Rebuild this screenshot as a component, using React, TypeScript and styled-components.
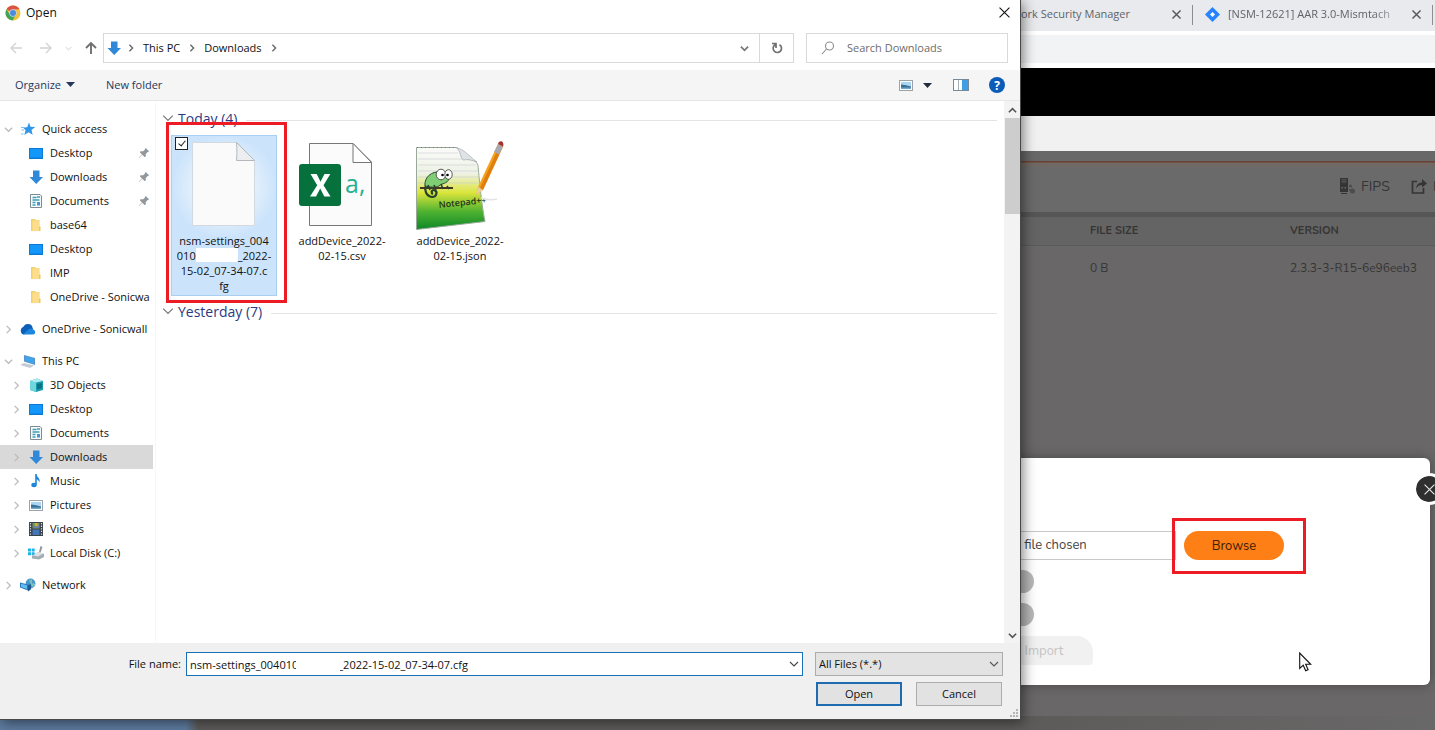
import React from "react";
import styled, { createGlobalStyle, css } from "styled-components";

const UI = `"Segoe UI", "Open Sans", "Noto Sans", sans-serif`;
const WEB = `"Nunito", "Open Sans", "Noto Sans", sans-serif`;

/* ---------- base ---------- */

const GlobalStyle = createGlobalStyle`
  *, *::before, *::after { box-sizing: border-box; }
  body { margin: 0; font-family: ${UI}; font-size: 11px; color: #111; background: #686767; }
  button, input, select { font: inherit; color: inherit; margin: 0; }
  button { padding: 0; border: 0; background: none; cursor: default; }
  ul { list-style: none; margin: 0; padding: 0; }
  svg { display: block; flex: none; }
`;

const Desktop = styled.div`
  --side: 415px;
  position: relative;
  min-height: 100vh;
  overflow: hidden;
  display: flex;
  flex-direction: column;
`;

/* ---------- browser behind the dialog ---------- */

const behind = css`
  padding-left: calc(100% - var(--side));
`;

const TabStrip = styled.div`
  ${behind}
  height: 31px;
  display: flex;
  align-items: center;
  background: #e8eaed;
  color: #5f6368;
`;

const Tab = styled.div<{ $width: number }>`
  display: flex;
  align-items: center;
  width: ${(p) => p.$width}px;
  height: 20px;
  margin-top: -2px;
  padding: 0 11px 0 12px;
  border-right: 1px solid #8b8d91;
  flex: none;
`;

const TabTitle = styled.span<{ $fade?: boolean }>`
  flex: 1;
  display: flex;
  justify-content: ${(p) => (p.$fade ? "flex-start" : "flex-end")};
  min-width: 0;
  overflow: ${(p) => (p.$fade ? "hidden" : "visible")};
  white-space: nowrap;
  line-height: 18px;
  padding-bottom: 2px;
  margin: ${(p) => (p.$fade ? "0 12px 0 8px" : "0 42px 0 0")};
  ${(p) =>
    p.$fade && "mask-image: linear-gradient(90deg, #000 84%, rgba(0, 0, 0, 0.3));"}
`;

const AddressBar = styled.div`
  height: 37px;
  border: solid #fff;
  border-width: 4px 0 5px;
  background: #f1f3f4;
`;

const BrandBar = styled.div`
  height: 48px;
  background: #000;
`;

const SubBar = styled.div`
  height: 35px;
  background: #f1f1f1;
`;

const Dimmed = styled.main`
  flex: 1;
  display: flex;
  flex-direction: column;
  background: #696767;
  font-family: ${WEB};
  color: #353535;
`;

const Actions = styled.div`
  height: 61px;
  padding-top: 9px;
  display: flex;
  align-items: center;
  justify-content: flex-end;
  gap: 20px;
  overflow: hidden;
  background: linear-gradient(#686868 10px, #6b4034 10px, #6b4034 11px, #746862 12px, #6a6a6a 17px);
`;

const Action = styled.button`
  display: flex;
  align-items: center;
  gap: 6px;
  height: 20px;
  font-size: 14px;
  width: 52px;
  white-space: nowrap;
  overflow: hidden;

  & + & {
    width: 24px;
  }
`;

const Table = styled.table`
  width: 100%;
  border-collapse: separate;
  border-spacing: 0;
  table-layout: fixed;
  border-top: 5px solid #565656;

  th,
  td {
    padding: 0;
    text-align: left;
    font-size: 11px;
    height: 29px;
    line-height: 16px;
  }
  th {
    background: #656464;
    border-bottom: 1px solid #5a5a5a;
  }
  td {
    height: 43px;
    font-size: 12px;
  }
  th:nth-child(2) {
    width: 200px;
  }
  th:last-child {
    width: 145px;
  }
`;

const Modal = styled.section`
  position: absolute;
  right: 5px;
  top: 458px;
  width: 640px;
  height: 227px;
  padding: 73px 0 0;
  border-radius: 6px;
  background: #fff;
  box-shadow: 0 0 12px rgba(0, 0, 0, 0.3);
  font-family: ${WEB};
  display: flex;
  flex-direction: column;
`;

const ChooseRow = styled.div`
  display: flex;
  justify-content: flex-end;
  gap: 8px;
  padding-right: 146px;
`;

const Chosen = styled.div`
  width: 320px;
  height: 29px;
  padding-left: 147px;
  border: 1px solid #c9c9c9;
  line-height: 27px;
  font-size: 13px;
  color: #444;
`;

const BrowseButton = styled.button`
  position: relative;
  width: 100px;
  height: 29px;
  border-radius: 15px;
  background: #ff7f17;
  color: #3c1d04;
  font-family: ${WEB};
  font-size: 13px;
`;

const Switches = styled.div`
  display: flex;
  flex-direction: column;
  gap: 10px;
  padding: 10px 396px 0 0;
  align-items: flex-end;
`;

const Switch = styled.input`
  appearance: none;
  margin: 0;
  width: 46px;
  height: 23px;
  border-radius: 12px;
  background: #b7b7b7;
`;

const ImportButton = styled.button`
  align-self: flex-end;
  width: 98px;
  height: 29px;
  margin: 10px 337px 0 0;
  border-radius: 4px 16px 4px 16px;
  background: #f1f1f1;
  color: #c4c4c4;
  font-family: ${WEB};
  font-size: 13px;
`;

const CloseModal = styled.button`
  position: absolute;
  right: -15px;
  top: 15px;
  width: 32px;
  height: 32px;
  border-radius: 50%;
  border: 3px solid #fff;
  background: #2f2f2f;
  background-clip: padding-box;
  display: grid;
  place-items: center;
`;

const Cursor = styled.svg`
  position: absolute;
  right: 118px;
  top: 194px;
`;

const Marker = styled.span<{ $inset: string }>`
  position: absolute;
  inset: ${(p) => p.$inset};
  border: 3px solid #ed1c24;
  pointer-events: none;
  z-index: 2;
`;

const Wallpaper = styled.div`
  position: absolute;
  left: 0;
  bottom: 0;
  width: 100%;
  height: 14px;
  background: linear-gradient(90deg, #5d7a9e 186px, #5d5b5a 198px, #5d5b5a calc(100% - 415px), #696868 100%);
`;

/* ---------- file dialog ---------- */

const Dialog = styled.section`
  position: absolute;
  inset: 0 calc(var(--side) - 1px) 10px 0;
  display: flex;
  flex-direction: column;
  background: #fff;
  border: solid #484848;
  border-width: 0 1px 1px 0;
  box-shadow: 2px 2px 12px rgba(0, 0, 0, 0.5);
`;

const TitleBar = styled.header`
  height: 33px;
  padding: 0 8px 8px 5px;
  display: flex;
  align-items: center;
  gap: 5px;
`;

const Title = styled.h1`
  flex: 1;
  margin: 0;
  font-size: 12px;
  font-weight: 400;
`;

const IconButton = styled.button<{ $w?: number; $h?: number }>`
  width: ${(p) => p.$w ?? 16}px;
  height: ${(p) => p.$h ?? 16}px;
  display: grid;
  place-items: center;
  flex: none;
`;

const NavRow = styled.nav`
  display: flex;
  align-items: center;
  height: 30px;
  padding: 0 12px 0 8px;
`;

const NavButtons = styled.div`
  display: flex;
  align-items: center;
  width: 95px;
  gap: 14px;

  & > :nth-child(3) {
    margin: 0 -3px 0 -4px;
  }
`;

const PathBox = styled.div`
  flex: 1;
  display: flex;
  align-items: center;
  height: 30px;
  border: 1px solid #d9d9d9;
`;

const Crumbs = styled.div`
  flex: 1;
  display: flex;
  align-items: center;
  gap: 8px;
  padding-left: 2px;

  & > svg:first-child {
    margin-right: -3px;
  }
  & > span {
    padding-bottom: 2px;
  }
`;

const Refresh = styled(IconButton)`
  border-left: 1px solid #d9d9d9;
`;

const SearchBox = styled.label`
  width: 202px;
  height: 30px;
  margin-left: 12px;
  padding: 0 13px 0 14px;
  display: flex;
  align-items: center;
  gap: 12px;
  border: 1px solid #d9d9d9;

  input {
    width: 100%;
    min-width: 0;
    padding: 0 0 2px;
    border: 0;
    outline: 0;
    background: none;
  }
  input::placeholder {
    color: #6d6d6d;
    opacity: 1;
  }
`;

const Toolbar = styled.div`
  display: flex;
  align-items: center;
  height: 31px;
  margin-top: 7px;
  padding: 0 15px;
  gap: 31px;
  background: #f5f5f6;
  border-bottom: 1px solid #e6e6e8;
  color: #26395b;
`;

const TextButton = styled.button`
  display: flex;
  align-items: center;
  gap: 5px;
  height: 24px;
  padding-bottom: 2px;
`;

const ViewTools = styled.div`
  display: flex;
  align-items: center;
  gap: 7px;
  margin-left: auto;

  & > :nth-child(n + 3) {
    margin-left: 10px;
  }
`;

const Body = styled.div`
  flex: 1;
  min-height: 0;
  display: flex;
`;

const Sidebar = styled.ul`
  width: 156px;
  padding: 16px 2px 0 0;
  border-right: 1px solid #f7f7f7;
  overflow: hidden;
  flex: none;
`;

const TreeRow = styled.li<{ $child?: boolean; $on?: boolean; $gap?: boolean }>`
  display: flex;
  align-items: center;
  gap: 7px;
  height: 24px;
  margin-top: ${(p) => (p.$gap ? 8 : 0)}px;
  padding-left: ${(p) => (p.$child ? 11 : 3)}px;
  background: ${(p) => (p.$on ? "#d9d9d9" : "none")};
  white-space: nowrap;
  overflow: hidden;
`;

const Twisty = styled.span`
  width: 10px;
  display: grid;
  place-items: center;
  flex: none;
`;

const RowLabel = styled.span`
  flex: 1;
  overflow: hidden;
  margin-left: -1px;
  padding-bottom: 2px;
`;

const PinSlot = styled.span`
  padding-right: 3px;
`;

const Pane = styled.div`
  flex: 1;
  min-width: 0;
  padding: 8px 7px 0 6px;
`;

const GroupHead = styled.h2`
  display: flex;
  align-items: center;
  gap: 4px;
  height: 20px;
  margin: 0;
  padding-bottom: 2px;
  font-size: 14px;
  font-weight: 400;
  color: #2c3a82;

  &::after {
    content: "";
    flex: 1;
    height: 1px;
    margin: 4px 0 0 5px;
    background: #e4e4e8;
  }
`;

const Tiles = styled.ul`
  display: grid;
  grid-template-columns: repeat(auto-fill, 106px);
  align-items: start;
  gap: 12px;
  padding: 6px 0 6px 9px;
`;

const Tile = styled.li<{ $on?: boolean }>`
  position: relative;
  height: 161px;
  padding: 4px 0 0;
  background: ${(p) => (p.$on ? "radial-gradient(closest-side at 50% 32%, #e2effc 60%, #cce4fb)" : "none")};
  border: 1px solid ${(p) => (p.$on ? "#a9d0f3" : "transparent")};
  text-align: center;
  line-height: 15px;
  display: flex;
  flex-direction: column;
  align-items: center;
  gap: 1px;
`;

const TileCheck = styled.input`
  position: absolute;
  left: 3px;
  top: 1px;
  appearance: none;
  width: 13px;
  height: 13px;
  margin: 0;
  border: 1px solid #222;
  background: #fff;

  &:checked::after {
    content: "";
    position: absolute;
    left: 4px;
    top: 1px;
    width: 4px;
    height: 7px;
    border: solid #222;
    border-width: 0 1px 1px 0;
    rotate: 40deg;
  }
`;

const Redacted = styled.span`
  display: inline-block;
  width: 42px;
  height: 14px;
  vertical-align: top;
  background: #fff;
`;

const ScrollTrack = styled.div`
  width: 16px;
  display: flex;
  flex-direction: column;
  align-items: center;
  justify-content: space-between;
  background: #f3f3f3;
  padding-top: 1px;
  flex: none;
`;

const Thumb = styled.div`
  width: 15px;
  height: 96px;
  background: #cdcdcd;
  margin-bottom: auto;
`;

const Footer = styled.footer`
  padding: 9px 17px 13px 0;
  background: #f0f0f0;
  display: flex;
  flex-direction: column;
  gap: 6px;
`;

const FieldRow = styled.div`
  display: flex;
  align-items: center;

  & > label {
    width: 186px;
    padding: 0 5px 2px 0;
    text-align: right;
  }
`;

const NameBox = styled.div`
  position: relative;
  flex: 1;
  height: 24px;
  display: flex;
  align-items: center;
  border: 1px solid #1b6fb5;
  background: #fff;

  input {
    flex: 1;
    min-width: 0;
    height: 20px;
    padding: 0 3px;
    border: 0;
    outline: 0;
    background: none;
  }
`;

const NameMask = styled.span`
  position: absolute;
  left: 109px;
  top: 3px;
  width: 44px;
  height: 16px;
  background: #fff;
`;

const TypeBox = styled.div`
  position: relative;
  width: 188px;
  margin-left: 12px;

  select {
    display: block;
    appearance: none;
    width: 100%;
    height: 24px;
    padding: 0 3px 2px;
    border: 1px solid #acacac;
    border-radius: 0;
    background: #e3e3e3;
  }
  svg {
    position: absolute;
    right: 4px;
    top: 7px;
  }
`;

const Buttons = styled.div`
  display: flex;
  justify-content: flex-end;
  gap: 14px;
  padding-right: 1px;
`;

const PushButton = styled.button<{ $primary?: boolean }>`
  width: 86px;
  height: 24px;
  padding-bottom: 2px;
  border: ${(p) => (p.$primary ? "2px solid #1f6bb0" : "1px solid #adadad")};
  background: #e2e2e2;
`;

const Grip = styled.svg`
  position: absolute;
  right: 1px;
  bottom: 1px;
`;

/* ---------- icons ---------- */

const Chevron = ({ dir, color = "#666", size = 10, w = 1.4 }: { dir: "up" | "down" | "right"; color?: string; size?: number; w?: number }) => (
  <svg width={size} height={size} viewBox="0 0 10 10" fill="none" stroke={color} strokeWidth={w}>
    <path d={dir === "right" ? "M3 1l4 4-4 4" : dir === "up" ? "M1 7l4-4 4 4" : "M1 3l4 4 4-4"} />
  </svg>
);

const Cross = ({ size, color, w = 1 }: { size: number; color: string; w?: number }) => (
  <svg width={size} height={size} viewBox="0 0 10 10" stroke={color} strokeWidth={w}>
    <path d="M.5 .5l9 9M9.500 .5l-9 9" />
  </svg>
);

const Arrow = ({ d, color, w }: { d: string; color: string; w: number }) => (
  <svg width="14" height="14" viewBox="0 0 14 14" fill="none" stroke={color} strokeWidth={w}>
    <path d={d} />
  </svg>
);

const Caret = ({ color }: { color: string }) => (
  <svg width="9" height="5" viewBox="0 0 9 5" fill={color}>
    <path d="M0 0h9L4.500 5z" />
  </svg>
);

const Chrome = () => (
  <svg width="16" height="16" viewBox="0 0 16 16">
    <circle cx="8" cy="8" r="7.500" fill="#f2c33a" />
    <path d="M8 8L1.500 4.300A7.500 7.500 0 0 1 14.500 4.300L8 4.500z" fill="#dc5246" />
    <path d="M1.500 4.300A7.500 7.500 0 0 0 7.500 15.500L11 9.500 8 8 4.900 9.700z" fill="#3fa35c" />
    <circle cx="8" cy="8" r="3.700" fill="#c5d6ea" />
    <circle cx="8" cy="8" r="3" fill="#4a8be0" />
  </svg>
);

const Pin = () => (
  <svg width="12" height="12" viewBox="0 0 12 12">
    <path d="M7.500 .8l3.700 3.700-1.500.4-2 2 .2 2.500L6.500 10 4.300 7.700 1 11l-.3-.3L4 7.400 1.800 5.200l.8-1 2.600.1 2-2z" fill="#90979d" />
  </svg>
);

type IconName =
  | "star" | "desktop" | "down" | "doc" | "folder" | "cloud" | "pc" | "cube" | "music" | "picture" | "video" | "disk" | "network";

const shapes: Record<IconName, React.ReactNode> = {
  star: (
    <>
      <path d="M9 1.500l1.500 4.200 4.700.3-3.700 3 1.200 4.800-4.200-2.600-4.200 2.800 1.300-4.800L3.500 7l3.800-.9z" fill="#2f97ea" />
      <path d="M1 6.500h4M1.500 9h2.500M1 13h2.500" stroke="#7fbdf0" />
    </>
  ),
  desktop: (
    <>
      <rect x="1" y="3" width="14" height="11" fill="#0a7ad6" />
      <rect x="2" y="4" width="12" height="8.500" fill="#1397fb" />
    </>
  ),
  down: <path d="M5 1.500h6.500v6.500H15L8.200 15 1.500 8H5z" fill="#3089d8" />,
  doc: (
    <>
      <path d="M2.500 1.500h9.500l1.500 1.500v11.500h-11z" fill="#f8fbfc" stroke="#7d8a91" />
      <path d="M4.500 4.500h4M4.500 7h7M4.500 9.500h3M4.500 12h3M9 4h3" stroke="#3f9cb4" strokeWidth="1.300" />
      <path d="M9 9h3v3.500H9z" fill="#4595d8" />
    </>
  ),
  folder: (
    <>
      <path d="M3 2h4l1 1h3.500v11H3z" fill="#f3cf6d" />
      <path d="M4.500 3.500H11V14l-6.500.3z" fill="#fbdd8b" />
      <path d="M11 9.500h1.500V14H11z" fill="#f0c75e" />
    </>
  ),
  cloud: (
    <>
      <path d="M4 13.500a4 4 0 0 1-.6-7.700A5 5 0 0 1 12 5l1 3z" fill="#0e5fb8" />
      <path d="M3 13.500L9 8a4 4 0 0 1 5 1 2.500 2.500 0 0 1-.5 4.500z" fill="#1d86dd" />
    </>
  ),
  pc: (
    <>
      <path d="M4 2l11 3v7L4 8.500z" fill="#5793c9" />
      <path d="M5 3.300l9 2.500v4.900L5 7.700z" fill="#3fa4ee" />
      <path d="M0 12l4-2 10 2.500-4 2.500z" fill="#c3ccd4" />
    </>
  ),
  cube: (
    <>
      <path d="M2 4l7-2.500L15 4v9l-7 2-6-2z" fill="#1a9cae" />
      <path d="M2 4l6 1.500V15l-6-2z" fill="#6fd6de" />
      <path d="M2 4l7-2.500L15 4 8 5.500z" fill="#b0edf0" />
      <path d="M9 7l5-1v5l-5 1.500z" fill="#0c7385" />
    </>
  ),
  music: (
    <>
      <path d="M8 1v10.500" stroke="#1d86dc" strokeWidth="1.600" />
      <path d="M8 1c.5 3 4.500 3.500 3.500 8.500C11 7.500 9.500 6.500 8 6z" fill="#1d86dc" />
      <ellipse cx="6" cy="12" rx="2.700" ry="2.200" fill="#1d86dc" />
    </>
  ),
  picture: (
    <>
      <rect x="1.500" y="3.500" width="13" height="10" fill="#fafcfd" stroke="#9aa3a9" />
      <rect x="3" y="5" width="10" height="7" fill="#a9d4f2" />
      <path d="M3 7.500l4 .5 6 1.500V12H3z" fill="#3b6f93" />
      <path d="M3 10.500h10V12H3z" fill="#6fa7cd" />
    </>
  ),
  video: (
    <>
      <rect x="1" y="1" width="14" height="14" fill="#39414a" />
      <path d="M2.500 2v13M13.500 2v13" stroke="#d8dde0" strokeWidth="1.200" strokeDasharray="1.300 1.300" />
      <rect x="4.500" y="2" width="7" height="5.500" fill="#7b9c58" />
      <rect x="4.500" y="8.500" width="7" height="5.500" fill="#4477ba" />
      <path d="M5 3l2 2.500h3L11 3v4H5z" fill="#6d7fa8" />
      <path d="M7 2h2.500v3H7z" fill="#d4ab43" />
    </>
  ),
  disk: (
    <>
      <path d="M0 3.500h3v3H0zM3.700 3.500h3v3h-3zM0 7.200h3v3H0zM3.700 7.200h3v3h-3z" fill="#1fb1e8" />
      <path d="M4 11l6-4 6 2v3l-5 2.500-7-1z" fill="#a3adb4" />
      <path d="M5 10.500L10 7l5.500 1.500L10 11.500z" fill="#dbe1e5" />
      <path d="M12.500 1l2 1-2 5.500-1.500-.5z" fill="#8c98a0" />
    </>
  ),
  network: (
    <>
      <circle cx="10.500" cy="6.500" r="4.900" fill="#4898c9" />
      <path d="M9 3c2-1.500 4 0 3 2s2 1 3 2-2 3-3 3z" fill="#7cc0c4" />
      <path d="M0 5.500l8 2v6l-8-3z" fill="#2c77b7" />
      <path d="M1 6.800l6 1.500v3.800L1 10z" fill="#60bdf3" />
      <path d="M8 8l3-.8v5L8 14.500z" fill="#1c5a90" />
    </>
  ),
};

const Icon = ({ name }: { name: IconName }) => (
  <svg width="16" height="16" viewBox="0 0 16 16" fill="none">
    {shapes[name]}
  </svg>
);

const BlankFile = () => (
  <svg width="90" height="92" viewBox="0 0 90 92">
    <path d="M13.500 2.500H58L75.500 21V85.500H13.500z" fill="#fafafa" stroke="#d4d9df" />
    <path d="M57.500 2.500C58 10 58 16 57.500 20.500H75.500z" fill="#eceef0" stroke="#b4b8bc" />
  </svg>
);

const CsvFile = () => (
  <svg width="90" height="92" viewBox="0 0 90 92">
    <path d="M12.500 3.500H56L74.500 22V85.500H12.500z" fill="#fbfbfb" stroke="#777" />
    <path d="M56 3.500V22.500H74.500z" fill="#fff" stroke="#777" />
    <rect x="2" y="24" width="42" height="42" rx="3" fill="#07713d" />
    <path d="M13.500 34h6.200l3.800 7.700 4-7.700h5.800l-6.800 11.300 7 11.300h-6.200L23.200 48.500 19 56.600h-6l7.200-11.400z" fill="#fff" />
    <text x="48" y="53" fontFamily="Open Sans, sans-serif" fontSize="25" fill="#25b192">a,</text>
  </svg>
);

const NotepadFile = () => (
  <svg width="90" height="92" viewBox="0 0 90 92" overflow="visible">
    <defs>
      <linearGradient id="sheet" x1="0" y1="0" x2="0" y2="1">
        <stop offset="0" stopColor="#fbfbfb" />
        <stop offset="0.320" stopColor="#eef1e4" />
        <stop offset="0.550" stopColor="#dbe53a" />
        <stop offset="0.780" stopColor="#4fb331" />
        <stop offset="1" stopColor="#0d8727" />
      </linearGradient>
    </defs>
    <g transform="translate(-1 0)">
      <path d="M2.500 7.500H42c6 1 3 9 9 11 6 1 12 2 13 7 1 10 3 36 7 56L2.500 89.500z" fill="url(#sheet)" stroke="#9aa89a" />
      <path d="M4 13h40M4 19h44M4 25h58M4 31h60M4 37h60M4 43h62" stroke="#c6ccd2" strokeWidth="0.600" />
      <path d="M3 7.500h40" stroke="#777" strokeDasharray="1 3" />
      <path d="M43 8c7 1 14 10 20 14-5-2-9-3-14-2-3-3-2-8-6-12z" fill="#dfe3e6" stroke="#a5abb0" strokeWidth="0.700" />
      <path d="M6 48h33" stroke="#4b3422" strokeWidth="2" />
      <path d="M12 45c-2 5 0 11 6 12 5 0 6-6 2-7-3 0-3 3-1 4" fill="none" stroke="#25422b" strokeWidth="2.200" />
      <path d="M11 46c-1-9 7-15 15-14 6 0 10 3 9 7-2 5-7 4-10 7-4 2-10 1-14 0z" fill="#7fce74" stroke="#2c4b30" strokeWidth="1" />
      <path d="M14 45l2 5M20 45l2 5M27 44l2 5M33 46l2 3" stroke="#25422b" strokeWidth="1.600" />
      <ellipse cx="27" cy="34.500" rx="4.800" ry="5.300" fill="#fff" stroke="#333" strokeWidth="0.800" />
      <ellipse cx="34.500" cy="34.500" rx="3.700" ry="4.800" fill="#fff" stroke="#333" strokeWidth="0.800" />
      <circle cx="28.500" cy="35" r="1.300" />
      <circle cx="33.500" cy="35" r="1.300" />
      <text x="25" y="68" fontFamily="Open Sans, sans-serif" fontSize="9" fontWeight="600" fill="#1f3418" transform="rotate(-6 25 68)">Notepad++</text>
      <path d="M62 55l2-8L84 4l5 2.500L69 50z" fill="#f5a31b" />
      <path d="M66 48L86 5l3 1.500L69 50z" fill="#e07e10" />
      <path d="M62 55l2-8 5 3z" fill="#e8cfa0" />
      <path d="M80 12l4-8 5 2.500-4 8z" fill="#a7a9b0" />
      <path d="M84 4c1-5 7-3 5 2.500z" fill="#a8322c" />
      <path d="M67 58q8 3 16 1" stroke="#e4e4e4" strokeWidth="1.500" fill="none" />
    </g>
  </svg>
);

/* ---------- data ---------- */

type Node = { label: string; icon: IconName; child?: boolean; gap?: boolean; on?: boolean; pin?: boolean; open?: boolean; leaf?: boolean };

const tree: Node[] = [
  { label: "Quick access", icon: "star", open: true },
  { label: "Desktop", icon: "desktop", child: true, leaf: true, pin: true },
  { label: "Downloads", icon: "down", child: true, leaf: true, pin: true },
  { label: "Documents", icon: "doc", child: true, leaf: true, pin: true },
  { label: "base64", icon: "folder", child: true, leaf: true },
  { label: "Desktop", icon: "desktop", child: true, leaf: true },
  { label: "IMP", icon: "folder", child: true, leaf: true },
  { label: "OneDrive - Sonicwa", icon: "folder", child: true, leaf: true },
  { label: "OneDrive - Sonicwall", icon: "cloud", gap: true },
  { label: "This PC", icon: "pc", gap: true, open: true },
  { label: "3D Objects", icon: "cube", child: true },
  { label: "Desktop", icon: "desktop", child: true },
  { label: "Documents", icon: "doc", child: true },
  { label: "Downloads", icon: "down", child: true, on: true },
  { label: "Music", icon: "music", child: true },
  { label: "Pictures", icon: "picture", child: true },
  { label: "Videos", icon: "video", child: true },
  { label: "Local Disk (C:)", icon: "disk", child: true },
  { label: "Network", icon: "network", gap: true },
];

const fileName = "nsm-settings_004010" + "\u00a0".repeat(14) + "_2022-15-02_07-34-07.cfg";

/* ---------- page ---------- */

const BrowserWindow = () => (
  <>
    <TabStrip>
      <Tab $width={173}>
        <TabTitle>Network Security Manager</TabTitle>
        <IconButton $w={9} aria-label="Close tab"><Cross size={9} color="#55585c" w={1.6} /></IconButton>
      </Tab>
      <Tab $width={240}>
        <svg width="15" height="15" viewBox="0 0 15 15">
          <path d="M7.500 0L15 7.500 7.500 15 0 7.500z" fill="#2684ff" />
          <path d="M7.500 5L10 7.500 7.500 10 5 7.500z" fill="#fff" />
        </svg>
        <TabTitle $fade>[NSM-12621] AAR 3.0-Mismtach</TabTitle>
        <IconButton $w={9} aria-label="Close tab"><Cross size={9} color="#55585c" w={1.6} /></IconButton>
      </Tab>
    </TabStrip>
    <AddressBar />
    <BrandBar />
    <SubBar />
    <Dimmed>
      <Actions>
        <Action>
          <svg width="16" height="16" viewBox="0 0 16 16" fill="#353535">
            <path fillRule="evenodd" d="M1 0h8v14H1zM2.500 1.500v3h5v-3zM2.500 9v1.500H4V9zm3 0v1.500H7V9z" />
            <path d="M2 2h6v.8H2zM2 3.500h6v.8H2z" />
            <path d="M2 15h6v1H2z" />
            <circle cx="11.500" cy="8" r="1.500" fill="#4c4c4c" />
            <circle cx="13.500" cy="13" r="2.500" fill="#4c4c4c" />
            <circle cx="10.800" cy="12" r="1" fill="#4c4c4c" />
          </svg>
          FIPS
        </Action>
        <Action aria-label="Export">
          <svg width="16" height="16" viewBox="0 0 16 16" fill="none" stroke="#353535" strokeWidth="1.700">
            <path d="M6 3.500H1.500V15h11V10" />
            <path d="M5 10.500C5.500 6.500 8 4.500 11 4.500V1l5 4.500-5 4V7C8.500 7 6.500 8 5 10.500z" fill="#353535" stroke="none" />
          </svg>
          E
        </Action>
      </Actions>
      <Table>
        <thead>
          <tr><th aria-label="Name" /><th>FILE SIZE</th><th>VERSION</th></tr>
        </thead>
        <tbody>
          <tr><td /><td>0 B</td><td>2.3.3-3-R15-6e96eeb3</td></tr>
        </tbody>
      </Table>
    </Dimmed>
    <Wallpaper />
    <Modal>
      <ChooseRow>
        <Chosen>No file chosen</Chosen>
        <BrowseButton>
          Browse
          <Marker $inset="-13px -22px -14px -12px" />
        </BrowseButton>
      </ChooseRow>
      <Switches>
        <Switch type="checkbox" aria-label="First option" />
        <Switch type="checkbox" aria-label="Second option" />
      </Switches>
      <ImportButton disabled>Import</ImportButton>
      <CloseModal aria-label="Close"><Cross size={11} color="#e8e8e8" w={1} /></CloseModal>
      <Cursor width="13" height="20" viewBox="0 0 13 20">
        <path d="M.7 1v15.500l3.500-3.300 2.500 5.600 2.400-1.100-2.400-5.400h5z" fill="#fff" stroke="#111" strokeWidth="1.100" />
      </Cursor>
    </Modal>
  </>
);

export default function App() {
  return (
    <Desktop>
      <GlobalStyle />
      <BrowserWindow />
      <Dialog role="dialog" aria-label="Open">
        <TitleBar>
          <Chrome />
          <Title>Open</Title>
          <IconButton aria-label="Close"><Cross size={11} color="#111" /></IconButton>
        </TitleBar>
        <NavRow>
          <NavButtons>
            <IconButton aria-label="Back"><Arrow color="#d4d4d4" w={1.4} d="M13 7H2M7 2L2 7l5 5" /></IconButton>
            <IconButton aria-label="Forward"><Arrow color="#d4d4d4" w={1.4} d="M1 7h11M7 2l5 5-5 5" /></IconButton>
            <IconButton $w={8} aria-label="Recent locations"><Chevron dir="down" color="#ccc" size={7} /></IconButton>
            <IconButton aria-label="Up"><Arrow color="#707070" w={1.9} d="M7 13V2M2 7l5-5 5 5" /></IconButton>
          </NavButtons>
          <PathBox>
            <Crumbs>
              <Icon name="down" />
              <Chevron dir="right" size={8} w={1.7} />
              <span>This PC</span>
              <Chevron dir="right" size={8} w={1.7} />
              <span>Downloads</span>
              <Chevron dir="right" size={8} w={1.7} />
            </Crumbs>
            <IconButton $w={30} $h={28} aria-label="Previous locations"><Chevron dir="down" size={9} w={2} color="#777" /></IconButton>
            <Refresh $w={34} $h={28} aria-label="Refresh">
              <svg width="12" height="12" viewBox="0 0 12 12" fill="none" stroke="#707070" strokeWidth="1.700">
                <path d="M8.500 2.700A4.200 4.200 0 1 1 4.500 2.500M1 1.500h4v4.500" />
              </svg>
            </Refresh>
          </PathBox>
          <SearchBox>
            <svg width="14" height="14" viewBox="0 0 14 14" fill="none" stroke="#8d8d8d" strokeWidth="1.100">
              <circle cx="8.500" cy="5" r="4" />
              <path d="M5.500 8L1 13" />
            </svg>
            <input type="search" placeholder="Search Downloads" aria-label="Search Downloads" />
          </SearchBox>
        </NavRow>
        <Toolbar>
          <TextButton>Organize <Caret color="#26395b" /></TextButton>
          <TextButton>New folder</TextButton>
          <ViewTools>
            <IconButton aria-label="Change view"><Icon name="picture" /></IconButton>
            <IconButton $w={12} aria-label="View options"><Caret color="#222c3c" /></IconButton>
            <IconButton $w={22} aria-label="Preview pane">
              <svg width="16" height="12" viewBox="0 0 16 12">
                <rect x=".5" y=".5" width="15" height="11" fill="#fff" stroke="#7b8994" />
                <path d="M5.500 1v10" stroke="#a5afb8" />
                <rect x="9" y="1" width="6" height="10" fill="#3f9ee8" />
              </svg>
            </IconButton>
            <IconButton aria-label="Help">
              <svg width="16" height="16" viewBox="0 0 16 16">
                <circle cx="8" cy="8" r="8" fill="#0b5cb8" />
                <text x="8" y="12.500" textAnchor="middle" fontFamily="Open Sans, sans-serif" fontWeight="700" fontSize="12" fill="#fff">?</text>
              </svg>
            </IconButton>
          </ViewTools>
        </Toolbar>
        <Body>
          <Sidebar>
            {tree.map((n, i) => (
              <TreeRow key={i} $child={n.child} $on={n.on} $gap={n.gap}>
                <Twisty>{!n.leaf && <Chevron dir={n.open ? "down" : "right"} color="#bbb" size={9} />}</Twisty>
                <Icon name={n.icon} />
                <RowLabel>{n.label}</RowLabel>
                {n.pin && <PinSlot><Pin /></PinSlot>}
              </TreeRow>
            ))}
          </Sidebar>
          <Pane>
            <GroupHead><Chevron dir="down" size={12} color="#777" w={1} />Today (4)</GroupHead>
            <Tiles>
              <Tile $on>
                <TileCheck type="checkbox" defaultChecked aria-label="Select file" />
                <BlankFile />
                <span>
                  nsm-settings_004<br />010<Redacted />_2022-<br />15-02_07-34-07.c<br />fg
                </span>
                <Marker $inset="-14px -11px -8px -6px" />
              </Tile>
              <Tile><CsvFile /><span>addDevice_2022-<br />02-15.csv</span></Tile>
              <Tile><NotepadFile /><span>addDevice_2022-<br />02-15.json</span></Tile>
            </Tiles>
            <GroupHead><Chevron dir="down" size={12} color="#777" w={1} />Yesterday (7)</GroupHead>
          </Pane>
          <ScrollTrack>
            <IconButton aria-label="Scroll up"><Chevron dir="up" size={9} w={1.8} color="#555" /></IconButton>
            <Thumb />
            <IconButton aria-label="Scroll down"><Chevron dir="down" size={9} w={1.8} color="#555" /></IconButton>
          </ScrollTrack>
        </Body>
        <Footer>
          <FieldRow>
            <label htmlFor="file-name">File name:</label>
            <NameBox>
              <input id="file-name" defaultValue={fileName} />
              <NameMask />
              <IconButton aria-label="Show file names"><Chevron dir="down" size={10} w={1.1} color="#444" /></IconButton>
            </NameBox>
            <TypeBox>
              <select aria-label="File type" defaultValue="all"><option value="all">All Files (*.*)</option></select>
              <Chevron dir="down" size={10} w={1.1} color="#555" />
            </TypeBox>
          </FieldRow>
          <Buttons>
            <PushButton $primary>Open</PushButton>
            <PushButton>Cancel</PushButton>
          </Buttons>
        </Footer>
        <Grip width="10" height="10" viewBox="0 0 10 10" fill="#b5b5b5">
          <path d="M7 1h2v2H7zM4 4h2v2H4zM7 4h2v2H7zM1 7h2v2H1zM4 7h2v2H4zM7 7h2v2H7z" />
        </Grip>
      </Dialog>
    </Desktop>
  );
}
